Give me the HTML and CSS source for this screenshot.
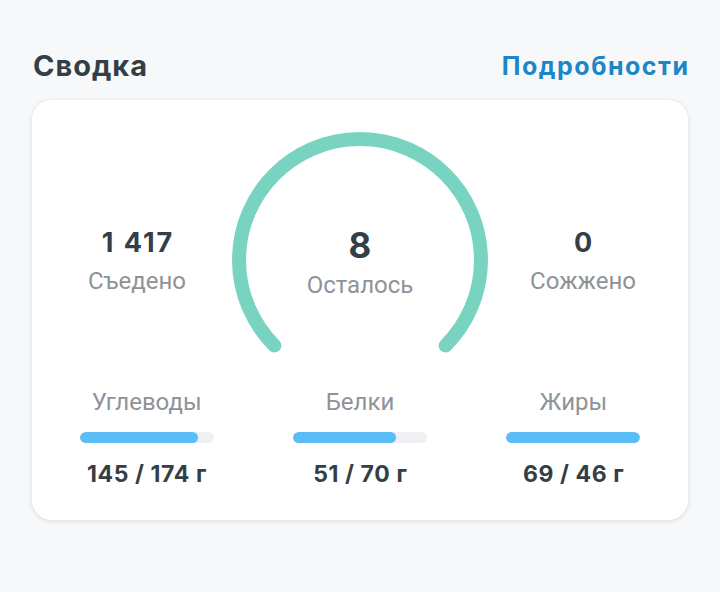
FILE: index.html
```html
<!DOCTYPE html>
<html lang="ru">
<head>
<meta charset="utf-8">
<link rel="stylesheet" href="styles.css">
</head>
<body>
<div class="page">
  <div class="header">
    <h2 class="title">Сводка</h2>
    <a class="more">Подробности</a>
  </div>
  <div class="card">
    <div class="top">
      <div class="stat">
        <div class="num">1 417</div>
        <div class="lbl">Съедено</div>
      </div>
      <div class="gauge">
        <svg class="arc" width="260" height="228" viewBox="0 0 260 228">
          <path d="M 44.4 215.6 A 121 121 0 1 1 215.6 215.6" fill="none" stroke="#79d3c1" stroke-width="14" stroke-linecap="round"/>
        </svg>
        <div class="center">
          <div class="big">8</div>
          <div class="lbl2">Осталось</div>
        </div>
      </div>
      <div class="stat">
        <div class="num">0</div>
        <div class="lbl">Сожжено</div>
      </div>
    </div>
    <div class="macros">
      <div class="macro">
        <div class="mlbl">Углеводы</div>
        <div class="track"><div class="fill" style="width:88%"></div></div>
        <div class="mval">145 / 174 г</div>
      </div>
      <div class="macro">
        <div class="mlbl">Белки</div>
        <div class="track"><div class="fill" style="width:77%"></div></div>
        <div class="mval">51 / 70 г</div>
      </div>
      <div class="macro">
        <div class="mlbl">Жиры</div>
        <div class="track"><div class="fill" style="width:100%"></div></div>
        <div class="mval">69 / 46 г</div>
      </div>
    </div>
  </div>
</div>
</body>
</html>
```
FILE: styles.css
```css
* { box-sizing: border-box; }
html, body {
  margin: 0;
  padding: 0;
  background: #f7f8fa;
  font-family: Roboto, "Noto Sans", sans-serif;
  width: 720px;
  height: 592px;
  overflow: hidden;
}
.page {
  padding: 44px 32px 0 32px;
}
.header {
  display: flex;
  justify-content: space-between;
  align-items: flex-start;
  height: 56px;
  padding: 0 0 0 1px;
}
.title {
  margin: 0;
  font-family: Inter, Roboto, sans-serif;
  font-size: 29px;
  font-weight: 700;
  letter-spacing: 1px;
  color: #343e46;
  line-height: 44px;
}
.more {
  font-family: Inter, Roboto, sans-serif;
  font-size: 25px;
  font-weight: 700;
  letter-spacing: 1.5px;
  margin-right: -1.5px;
  color: #1b86c8;
  line-height: 44px;
}
.card {
  background: #fff;
  border-radius: 20px;
  box-shadow: 0 1px 5px rgba(0,0,0,0.12);
  height: 420px;
  padding: 30px 12px 0 12px;
}
.top {
  display: grid;
  grid-template-columns: 1fr 260px 1fr;
}
.stat {
  display: flex;
  flex-direction: column;
  align-items: center;
  padding-top: 97px;
}
.num {
  font-family: Inter, Roboto, sans-serif;
  font-size: 27px;
  font-weight: 700;
  letter-spacing: 2px;
  margin-right: -2px;
  color: #343e46;
  line-height: 32px;
}
.lbl {
  font-size: 24px;
  color: #8e9399;
  line-height: 28px;
  margin-top: 8px;
}
.gauge {
  display: grid;
}
.arc, .center {
  grid-area: 1 / 1;
}
.center {
  display: flex;
  flex-direction: column;
  align-items: center;
  padding-top: 95px;
}
.big {
  font-family: Inter, Roboto, sans-serif;
  font-size: 35px;
  font-weight: 700;
  color: #343e46;
  line-height: 40px;
}
.lbl2 {
  font-size: 24px;
  color: #8e9399;
  line-height: 28px;
  margin-top: 6px;
}
.macros {
  display: grid;
  grid-template-columns: repeat(3, 1fr);
  margin: 30px -4px 0 -4px;
}
.macro {
  display: flex;
  flex-direction: column;
  align-items: center;
}
.mlbl {
  font-size: 24px;
  color: #8e9399;
  line-height: 28px;
}
.track {
  width: 134px;
  height: 11px;
  border-radius: 6px;
  background: #eef0f3;
  margin-top: 16px;
  overflow: hidden;
}
.fill {
  height: 100%;
  background: #5bbdf6;
  border-radius: 6px;
}
.mval {
  font-family: Inter, Roboto, sans-serif;
  font-size: 23px;
  font-weight: 700;
  letter-spacing: 0.6px;
  margin-right: -0.6px;
  color: #343e46;
  line-height: 28px;
  margin-top: 17px;
}
```
